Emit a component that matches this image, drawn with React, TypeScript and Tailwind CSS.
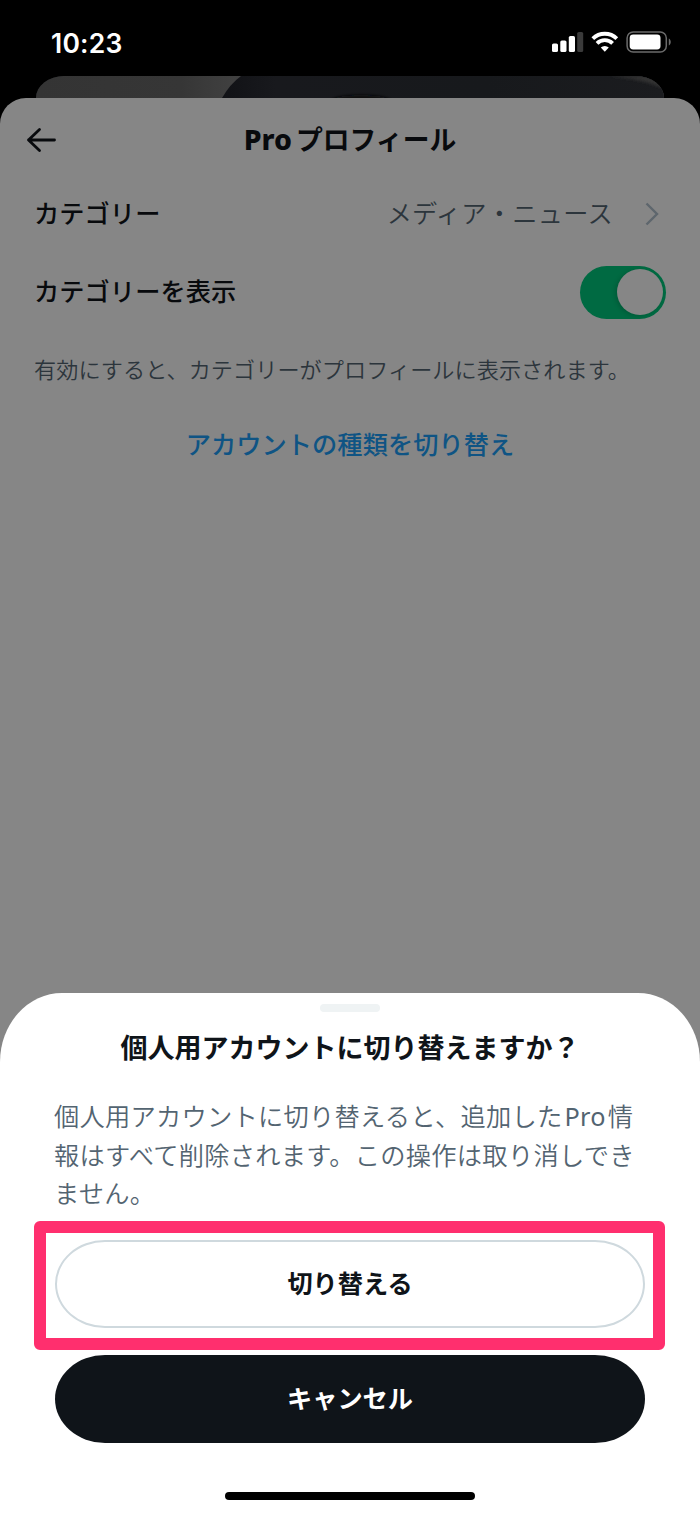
import type { ReactNode } from 'react';

function StatusBar() {
  return (
    <div className="flex h-[76px] items-start justify-between pt-[26px] pr-[29px] pl-[51px]">
      <span className="pt-px font-[Inter,sans-serif] text-[26.5px] leading-8 font-semibold tracking-[0.2px] text-white">10:23</span>
      <svg className="mt-[5px] h-[22px] w-[120px]" viewBox="551 31 120 22" fill="white">
        <rect x="552" y="43.5" width="6" height="8.5" rx="1.6" />
        <rect x="560.3" y="40.5" width="6.2" height="11.5" rx="1.6" />
        <rect x="568.8" y="36" width="6.2" height="16" rx="1.6" />
        <rect x="577.2" y="32" width="6" height="20" rx="1.6" fill="#3a3a3a" />
        <g fill="none" stroke="white" strokeWidth="3.9">
          <path d="M592.8 38.6a17.3 17.3 0 0 1 24 0" />
          <path d="M597 43.3a11.2 11.2 0 0 1 15.6 0" />
        </g>
        <path d="M604.8 51.8l-4-4.2a5.8 5.8 0 0 1 8 0z" />
        <rect x="627.1" y="32" width="39.2" height="20" rx="6" fill="none" stroke="#6b6b6b" strokeWidth="1.5" />
        <rect x="629.7" y="34.6" width="30.8" height="14.8" rx="3.4" />
        <path d="M668.8 38.5c2.6 1.2 2.6 5.8 0 7z" fill="#6b6b6b" />
      </svg>
    </div>
  );
}

// Header photo of the profile page that peeks out above the sheet
function ProfilePeek() {
  return (
    <div className="mx-9 h-[22px] overflow-hidden rounded-t-[28px_22px] bg-[#17191d]">
      <svg className="block h-[22px] w-full" viewBox="36 76 628 22" preserveAspectRatio="none">
        <defs>
          <linearGradient id="wall" x1="0" x2="0.33">
            <stop offset="0" stopColor="#343434" />
            <stop offset="0.7" stopColor="#363636" />
            <stop offset="1" stopColor="#424242" />
          </linearGradient>
          <linearGradient id="edge" x1="0" x2="1">
            <stop offset="0" stopColor="#111216" />
            <stop offset="0.12" stopColor="#18191d" />
            <stop offset="0.6" stopColor="#17191c" />
            <stop offset="1" stopColor="#1b1c1f" />
          </linearGradient>
          <filter id="soft" x="-10%" y="-60%" width="120%" height="220%">
            <feGaussianBlur stdDeviation="1.5" />
          </filter>
        </defs>
        <rect x="36" y="76" width="628" height="22" fill="url(#wall)" />
        <path d="M241 76H664V98H222Q230 84 241 76z" fill="url(#edge)" />
        <ellipse cx="361" cy="101" rx="30" ry="6" fill="#0a0b0e" filter="url(#soft)" />
        <path d="M610 76C630 78 650 82 662 88V76z" fill="#333333" filter="url(#soft)" />
      </svg>
    </div>
  );
}

function Row({ label, children }: { label: string; children: ReactNode }) {
  return (
    <div className="flex h-[78px] items-center justify-between px-[34px]">
      <span className="text-[25.2px] font-medium tracking-[0.1px] text-[#080a0d]">{label}</span>
      {children}
    </div>
  );
}

function ProfileSettings() {
  return (
    <div className="bg-black">
      <div className="h-[895px] rounded-t-[26px] bg-[#868686]">
        <header className="flex h-[77px] items-center pt-[7px] pl-[26px]">
          <svg className="h-[26px] w-[31px] shrink-0" viewBox="0 0 31 26" fill="none" stroke="#080a0d" strokeWidth="2.8" strokeLinecap="round" strokeLinejoin="round">
            <path d="M13.5 2.5L2.5 13L13.5 23.5M2.5 13H28.5" />
          </svg>
          <h1 className="mr-[57px] flex-1 text-center text-[26.8px] font-bold text-[#080a0d]">
            <span className="mr-1 text-[28.5px] leading-none font-extrabold">Pro</span>プロフィール
          </h1>
        </header>
        <Row label="カテゴリー">
          <div className="flex items-center">
            <span className="text-[25.2px] font-[350] tracking-[0.3px] text-[#2c353c]">メディア・ニュース</span>
            <svg className="mr-1.5 ml-8 h-6 w-[15px]" viewBox="0 0 15 24" fill="none" stroke="#5e666d" strokeWidth="2.4">
              <path d="M1.5 1.5L12 12L1.5 22.5" />
            </svg>
          </div>
        </Row>
        <Row label="カテゴリーを表示">
          <div className="flex h-[53px] w-[86px] items-center justify-end rounded-full bg-[#006a42] pr-[3px]">
            <div className="size-[46px] rounded-full bg-[#868686] shadow-[-2px_1px_4px_rgba(0,0,0,0.15)]" />
          </div>
        </Row>
        <p className="px-[34px] pt-[22px] text-[22.15px] leading-8 font-[350] tracking-[0.05px] text-[#2c353c]">
          有効にすると、カテゴリーがプロフィールに表示されます。
        </p>
        <p className="pt-[41px] text-center text-[25.2px] leading-9 font-medium tracking-[0.1px] text-[#0f5484]">
          アカウントの種類を切り替え
        </p>
      </div>
    </div>
  );
}

function ConfirmSheet() {
  return (
    <div className="bg-[#868686]">
      <div className="flex h-[521px] flex-col items-center rounded-t-[62px_69px] bg-white">
        <div className="mt-[11px] h-2 w-[60px] rounded-full bg-[#eff3f4]" />
        <h2 className="mt-4 text-[27px] leading-10 font-bold text-[#0f1419]">
          個人用アカウントに切り替えますか？
        </h2>
        <p className="mt-[29px] w-[592px] text-[25.25px] leading-[38.7px] font-[350] tracking-[0.26px] text-[#536471]">
          個人用アカウントに切り替えると、追加した<span className="mx-0.5 font-normal">Pro</span>情
          <br />
          報はすべて削除されます。この操作は取り消しでき
          <br />
          ません。
        </p>
        <div className="relative mt-[27px] w-[590px]">
          <button className="block h-[88px] w-full rounded-[50px_/_44px] border-2 border-[#cfd9de] text-[25.2px] font-bold text-[#0f1419]">
            切り替える
          </button>
          <div className="pointer-events-none absolute -top-[19px] -right-5 -bottom-[22px] -left-[21px] rounded-md border-[12.5px] border-[#ff2f6e]" />
        </div>
        <button className="mt-[27px] h-[88px] w-[590px] shrink-0 rounded-[50px_/_44px] bg-[#0f1419] text-[25.2px] font-bold text-white">
          キャンセル
        </button>
        <div className="mt-[49px] h-2 w-[250px] shrink-0 rounded-full bg-black" />
      </div>
    </div>
  );
}

export default function App() {
  return (
    <div lang="ja" className="h-[1514px] w-[700px] overflow-hidden bg-black font-['Noto_Sans','Noto_Sans_CJK_JP',sans-serif]">
      <StatusBar />
      <ProfilePeek />
      <ProfileSettings />
      <ConfirmSheet />
    </div>
  );
}
